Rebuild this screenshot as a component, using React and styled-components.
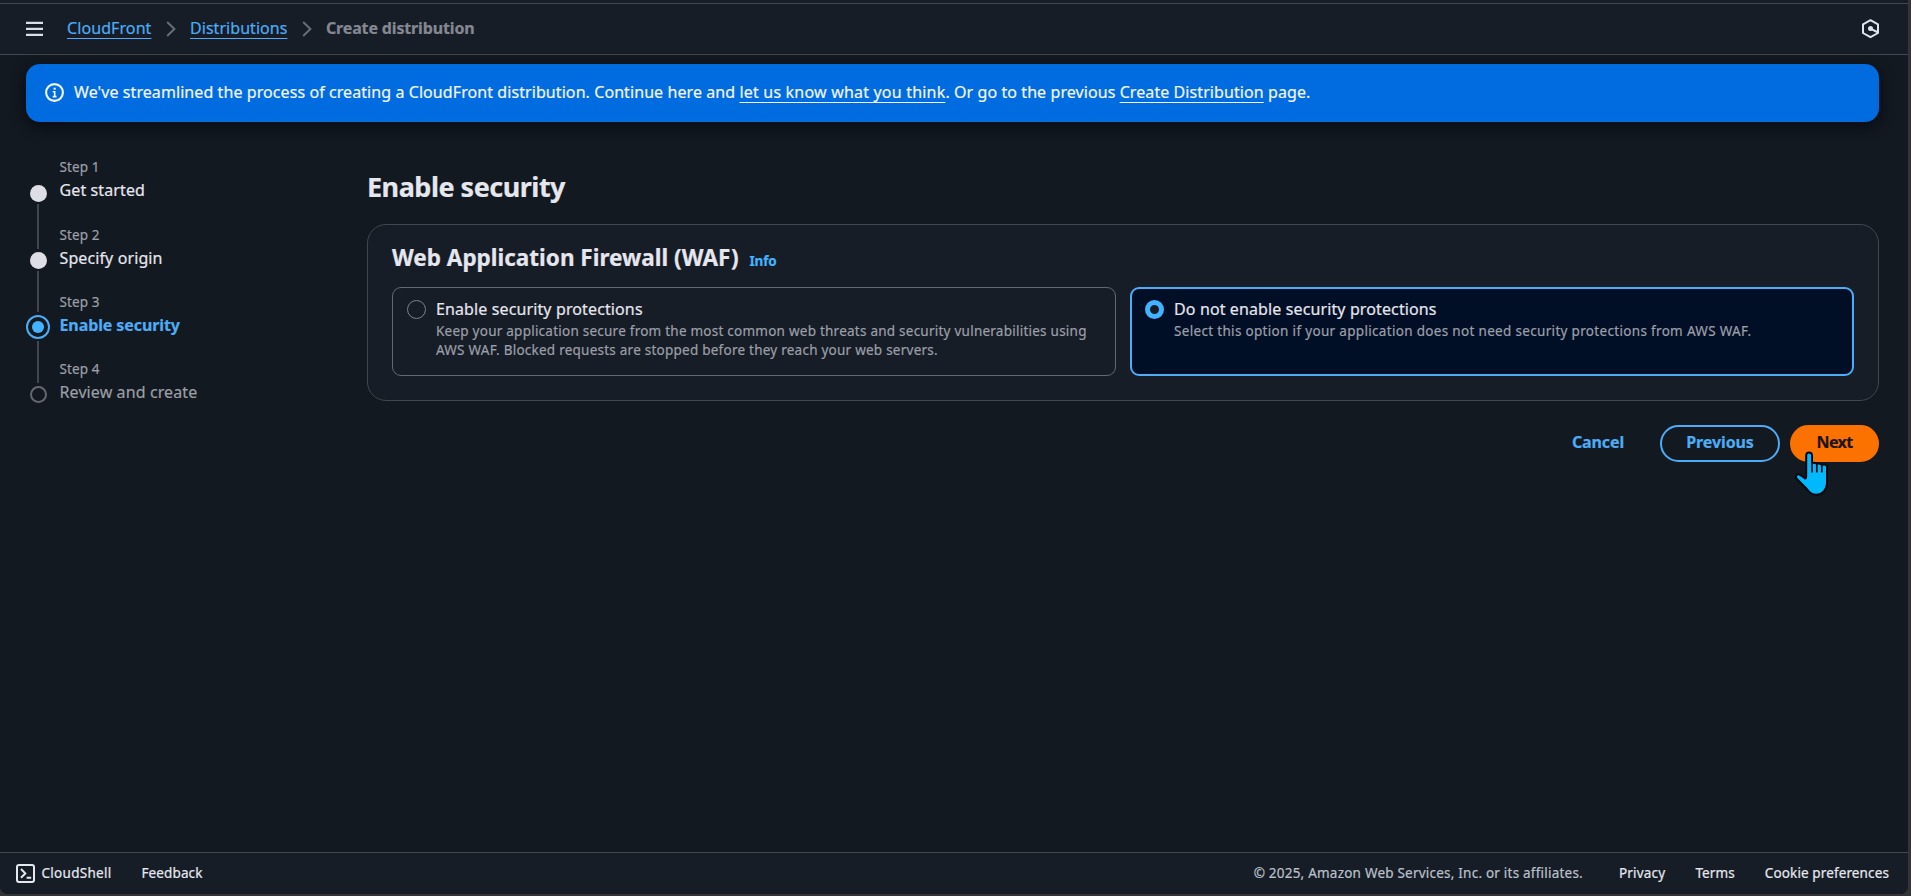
import React from "react";
import styled, { createGlobalStyle, css } from "styled-components";

const c = {
  page: "#131920",
  surface: "#161d26",
  divider: "#42464f",
  link: "#4dacf5",
  accent: "#42b4ff",
  text: "#e6e6ee",
  muted: "#9c9fa8",
};

const GlobalStyle = createGlobalStyle`
  * { box-sizing: border-box; }
  body {
    margin: 0;
    background: #343436;
    font-family: "Noto Sans", "Open Sans", sans-serif;
    font-size: 16px;
    line-height: 24px;
    color: ${c.text};
    -webkit-text-stroke: 0.2px;
  }
  h1, h2, p, ol { margin: 0; padding: 0; }
`;

const Window = styled.div`
  display: flex;
  flex-direction: column;
  width: 1908px;
  height: 894px;
  overflow: hidden;
  background: ${c.page};
  border-radius: 0 0 8px 8px;
`;

const TopEdge = styled.div`
  height: 4px;
  flex: none;
  background: ${c.surface};
  border-bottom: 1px solid ${c.divider};
`;

const Header = styled.header`
  display: flex;
  align-items: center;
  flex: none;
  height: 51px;
  padding: 0 28px 0 26px;
  background: ${c.surface};
  border-bottom: 1px solid ${c.divider};
`;

const Breadcrumbs = styled.nav`
  display: flex;
  align-items: center;
  margin: 0 auto 2px 24px;
`;

const Crumb = styled.a`
  color: ${c.link};
  letter-spacing: ${(p) => p.$spacing || "0.05px"};
  text-decoration: underline;
  text-decoration-thickness: 1px;
  text-underline-offset: 4px;
  text-decoration-skip-ink: none;
`;

const CurrentCrumb = styled.span`
  color: #858892;
  font-weight: 700;
  letter-spacing: -0.15px;
`;

const Separator = styled.svg`
  width: 10px;
  height: 16px;
  margin: 2px 14px 0 14.5px;
`;

const Banner = styled.section`
  display: flex;
  align-items: center;
  flex: none;
  gap: 10px;
  height: 58px;
  margin: 9px 29px 0 26px;
  padding: 0 19px 1px;
  background: #006ce0;
  color: #f2f6fc;
  border-radius: 14px;
  box-shadow: 0 4px 14px 1px rgba(0, 7, 16, 0.7);
`;

const BannerText = styled.p`
  padding-bottom: 1px;
  letter-spacing: 0.078px;
  white-space: nowrap;
`;

const BannerLink = styled.a`
  letter-spacing: ${(p) => p.$spacing};
  text-decoration: underline;
  text-decoration-thickness: 1px;
  text-underline-offset: 4px;
  text-decoration-skip-ink: none;
`;

const Body = styled.div`
  display: flex;
  flex: 1;
  padding: 35px 29px 0 26px;
`;

const StepNav = styled.nav`
  display: flex;
  align-items: flex-start;
  flex: none;
  gap: 9.5px;
  width: 341px;
`;

const Rail = styled.div`
  display: flex;
  flex-direction: column;
  align-items: center;
  width: 24px;
  padding-top: 24px;
`;

const DotSlot = styled.div`
  display: flex;
  align-items: center;
  justify-content: center;
  flex: none;
  width: 24px;
  height: 24px;
  border-radius: 50%;
  ${(p) => p.$state === "active" && css`border: 2px solid ${c.link};`}
`;

const Dot = styled.span`
  width: 17px;
  height: 17px;
  border-radius: 50%;
  background: #dedee6;
  ${(p) => p.$state === "active" && css`
    width: 12px;
    height: 12px;
    background: ${c.accent};
  `}
  ${(p) => p.$state === "upcoming" && css`
    background: none;
    border: 2px solid #656871;
  `}
`;

const ConnectorSlot = styled.span`
  display: flex;
  height: 43px;
`;

const Connector = styled.span`
  width: 2px;
  margin: ${(p) => p.$margin};
  background: ${c.divider};
`;

const StepList = styled.ol`
  list-style: none;
`;

const StepItem = styled.li`
  height: 67px;
  padding-top: 1px;
  &:first-child { height: 68px; }
`;

const StepNumber = styled.div`
  margin-bottom: 1px;
  font-size: 13.5px;
  line-height: 19px;
  letter-spacing: 0.1px;
  color: ${c.muted};
`;

const StepTitle = styled.div`
  letter-spacing: 0.11px;
  color: ${(p) => (p.$state === "upcoming" ? c.muted : c.text)};
  ${(p) => p.$state === "active" && css`
    color: ${c.link};
    font-weight: 700;
    letter-spacing: -0.1px;
  `}
`;

const Main = styled.main`
  flex: 1;
  padding-top: 13px;
`;

const PageTitle = styled.h1`
  margin-bottom: 21px;
  font-size: 27px;
  line-height: 33px;
  font-weight: 700;
  letter-spacing: -0.5px;
`;

const Card = styled.section`
  padding: 19px 24px 24px;
  background: ${c.surface};
  border: 1px solid ${c.divider};
  border-radius: 19px;
`;

const CardHeader = styled.div`
  display: flex;
  align-items: baseline;
  gap: 11px;
  height: 28px;
  margin-bottom: 15px;
`;

const CardTitle = styled.h2`
  font-size: 22.5px;
  line-height: 28px;
  font-weight: 700;
`;

const InfoLink = styled.a`
  color: ${c.accent};
  font-size: 13.5px;
  font-weight: 700;
  letter-spacing: -0.17px;
`;

const Tiles = styled.div`
  display: grid;
  grid-template-columns: 1fr 1fr;
  gap: 14px;
`;

const Tile = styled.label`
  display: flex;
  gap: 10px;
  height: 89px;
  padding: 9px 14px;
  border: 1px solid #656871;
  border-radius: 9px;
  ${(p) => p.$selected && css`
    padding: 8px 13px;
    background: #000f26;
    border: 2px solid ${c.link};
  `}
`;

const Radio = styled.span`
  flex: none;
  width: 19px;
  height: 19px;
  margin-top: 3px;
  border: 1.5px solid #7d808a;
  border-radius: 50%;
  ${(p) => p.$selected && css`
    border: 5.5px solid ${c.accent};
    background: ${c.surface};
  `}
`;

const TileLabel = styled.div`
  letter-spacing: 0.12px;
`;

const TileDescription = styled.p`
  margin-top: 1px;
  font-size: 13.5px;
  line-height: 19px;
  letter-spacing: ${(p) => p.$spacing};
  white-space: nowrap;
  color: ${c.muted};
`;

const Actions = styled.div`
  display: flex;
  justify-content: flex-end;
  gap: 10px;
  margin-top: 24px;
`;

const Button = styled.button`
  position: relative;
  display: flex;
  align-items: center;
  justify-content: center;
  width: ${(p) => p.$width};
  height: 37px;
  padding: 0 0 3px;
  background: none;
  border: 2px solid transparent;
  border-radius: 19px;
  color: ${c.link};
  font: 700 16px/24px "Noto Sans", "Open Sans", sans-serif;
  letter-spacing: -0.1px;
  ${(p) => p.$variant === "normal" && css`border-color: ${c.link};`}
  ${(p) => p.$variant === "primary" && css`
    background: #fb7200;
    border-color: #fb7200;
    color: #1b150f;
    letter-spacing: -0.6px;
  `}
`;

const Pointer = styled.svg`
  position: absolute;
  left: 2px;
  top: 23.5px;
  width: 36px;
  height: 46px;
  pointer-events: none;
`;

const Footer = styled.footer`
  display: flex;
  align-items: center;
  flex: none;
  height: 42px;
  padding: 0 19px 1px 16px;
  background: ${c.surface};
  border-top: 1px solid ${c.divider};
  font-size: 13.5px;
`;

const FooterGroup = styled.div`
  display: flex;
  align-items: center;
  gap: 30px;
  &:last-child { margin-left: auto; }
`;

const FooterLink = styled.a`
  display: flex;
  align-items: center;
  gap: 6.5px;
  color: #e6e8f0;
  letter-spacing: ${(p) => p.$spacing || "0.12px"};
`;

const Copyright = styled.span`
  margin-right: 6px;
  color: #bcc0ca;
  letter-spacing: 0.22px;
`;

const Chevron = () => (
  <Separator viewBox="0 0 10 16" fill="none" stroke="#696d77" strokeWidth="2">
    <path d="M1.2 1L8.4 8L1.2 15" />
  </Separator>
);

const MenuIcon = () => (
  <svg width="17" height="17" viewBox="0 0 17 17" fill="#d9dee7">
    <path d="M0 .8h17v2.2H0zM0 6.8h17v2.2H0zM0 12.8h17v2.2H0z" />
  </svg>
);

const HexagonIcon = () => (
  <svg width="19" height="20" viewBox="0 0 19 20" fill="none" stroke="#dfe3ec" strokeWidth="2">
    <path d="M9.5 1.2L17 5.4V14L9.5 18.2L2 14V5.4Z" strokeLinejoin="round" />
    <path d="M9.5 9.6L16.6 13.2" strokeWidth="2.1" />
    <circle cx="9.5" cy="9.6" r="2.5" fill="#dfe3ec" stroke="none" />
  </svg>
);

const InfoIcon = () => (
  <svg width="19" height="19" viewBox="0 0 19 19" fill="none" stroke="#f2f6fc" strokeWidth="2.1">
    <circle cx="9.5" cy="9.5" r="8.4" />
    <path d="M7.7 8.7H9.7V13.6M7.7 13.6H11.5" strokeWidth="1.6" />
    <path d="M8.6 5.7H10.7" strokeWidth="2" />
  </svg>
);

const ShellIcon = () => (
  <svg width="19" height="19" viewBox="0 0 19 19" fill="none" stroke="#e6e8f0" strokeWidth="2">
    <rect x="1" y="1" width="17" height="17" rx="2" />
    <path d="M5 5L9.3 9.4L5 13.8M10.6 13.8H15.2" />
  </svg>
);

const HandPointer = () => (
  <Pointer viewBox="0 0 36 46" stroke="#02080e" strokeWidth="2">
    <path
      fill="#00b9fd"
      strokeLinejoin="round"
      d="M12.2 24.6V4.3a2.9 2.9 0 0 1 5.8 0V12.2q2.4-1.2 4.8.6q2.8-1 5 .9q5.2-1.2 5.2 2.6V32c0 7-4.6 11.8-10.8 11.8c-4.4 0-7-2.4-9.4-5.8L2.4 27.4c-1.4-2.6.6-4.9 3.4-3.7c1.8.7 3.6 2.4 5 3.6q1.4.6 1.4-2.7z"
    />
    <path fill="none" strokeWidth="1.7" d="M18 12V21.5M22.8 13V21.5M27.8 14V21.5" />
  </Pointer>
);

const steps = [
  { title: "Get started", state: "done", connector: "-1px 0" },
  { title: "Specify origin", state: "done", connector: "-1px 0 3px" },
  { title: "Enable security", state: "active", connector: "2px 0 -1px" },
  { title: "Review and create", state: "upcoming" },
];

export default function App() {
  return (
    <>
      <GlobalStyle />
      <Window>
        <TopEdge />
        <Header>
          <MenuIcon />
          <Breadcrumbs>
            <Crumb $spacing="0.09px">CloudFront</Crumb>
            <Chevron />
            <Crumb>Distributions</Crumb>
            <Chevron />
            <CurrentCrumb>Create distribution</CurrentCrumb>
          </Breadcrumbs>
          <HexagonIcon />
        </Header>

        <Banner>
          <InfoIcon />
          <BannerText>
            We've streamlined the process of creating a CloudFront distribution. Continue here and{" "}
            <BannerLink $spacing="0.2px">let us know what you think</BannerLink>. Or go to the previous{" "}
            <BannerLink $spacing="0.08px">Create Distribution</BannerLink> page.
          </BannerText>
        </Banner>

        <Body>
          <StepNav>
            <Rail>
              {steps.map((s) => (
                <React.Fragment key={s.title}>
                  <DotSlot $state={s.state}>
                    <Dot $state={s.state} />
                  </DotSlot>
                  {s.connector && (
                    <ConnectorSlot>
                      <Connector $margin={s.connector} />
                    </ConnectorSlot>
                  )}
                </React.Fragment>
              ))}
            </Rail>
            <StepList>
              {steps.map((s, i) => (
                <StepItem key={s.title}>
                  <StepNumber>Step {i + 1}</StepNumber>
                  <StepTitle $state={s.state}>{s.title}</StepTitle>
                </StepItem>
              ))}
            </StepList>
          </StepNav>

          <Main>
            <PageTitle>Enable security</PageTitle>
            <Card>
              <CardHeader>
                <CardTitle>Web Application Firewall (WAF)</CardTitle>
                <InfoLink>Info</InfoLink>
              </CardHeader>
              <Tiles>
                <Tile>
                  <Radio />
                  <div>
                    <TileLabel>Enable security protections</TileLabel>
                    <TileDescription $spacing="0.24px">
                      Keep your application secure from the most common web threats and security vulnerabilities using
                      <br />
                      AWS WAF. Blocked requests are stopped before they reach your web servers.
                    </TileDescription>
                  </div>
                </Tile>
                <Tile $selected>
                  <Radio $selected />
                  <div>
                    <TileLabel>Do not enable security protections</TileLabel>
                    <TileDescription $spacing="0.32px">
                      Select this option if your application does not need security protections from AWS WAF.
                    </TileDescription>
                  </div>
                </Tile>
              </Tiles>
            </Card>
            <Actions>
              <Button $width="104px">Cancel</Button>
              <Button $width="120px" $variant="normal">Previous</Button>
              <Button $width="89px" $variant="primary">
                Next
                <HandPointer />
              </Button>
            </Actions>
          </Main>
        </Body>

        <Footer>
          <FooterGroup>
            <FooterLink $spacing="0.28px"><ShellIcon />CloudShell</FooterLink>
            <FooterLink>Feedback</FooterLink>
          </FooterGroup>
          <FooterGroup>
            <Copyright>© 2025, Amazon Web Services, Inc. or its affiliates.</Copyright>
            <FooterLink $spacing="0.2px">Privacy</FooterLink>
            <FooterLink>Terms</FooterLink>
            <FooterLink>Cookie preferences</FooterLink>
          </FooterGroup>
        </Footer>
      </Window>
    </>
  );
}
